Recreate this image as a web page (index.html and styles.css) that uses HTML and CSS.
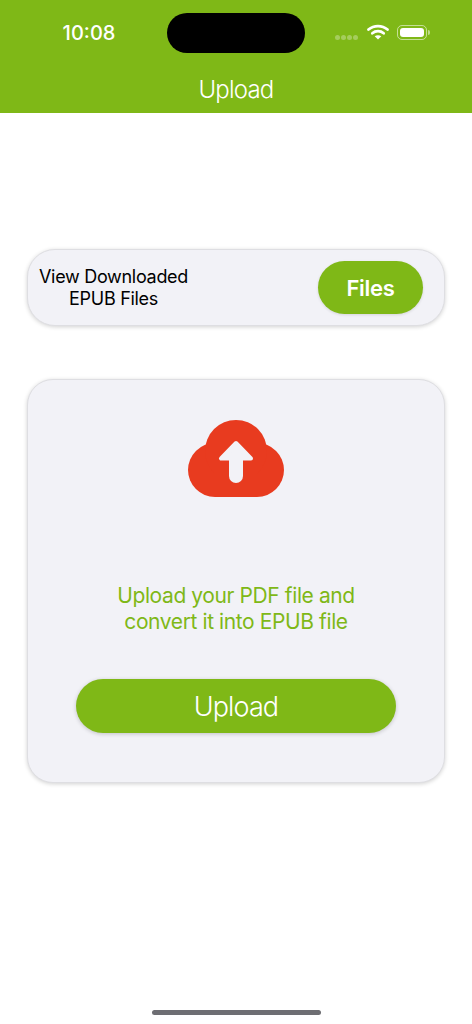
FILE: index.html
```html
<!DOCTYPE html>
<html lang="en">
<head>
  <meta charset="UTF-8" />
  <meta name="viewport" content="width=device-width, initial-scale=1.0" />
  <title>Upload</title>
  <link rel="stylesheet" href="styles.css">
</head>
<body>
  <header class="header">
    <div class="status-bar">
      <span class="time">10:08</span>
      <div class="island"></div>
      <div class="status-icons">
        <div class="signal"><i></i><i></i><i></i><i></i></div>
        <svg class="wifi" width="22" height="16" viewBox="0 0 22 16">
          <path d="M1.500 5.600C6.800.9 15.200.9 20.500 5.600" fill="none" stroke="#fff" stroke-width="2.700" stroke-linecap="round"/>
          <path d="M5.300 9.300C8.600 6.500 13.400 6.500 16.700 9.300" fill="none" stroke="#fff" stroke-width="2.700" stroke-linecap="round"/>
          <path d="M11 15.600 7.700 12.300C9.600 10.900 12.400 10.900 14.300 12.300Z" fill="#fff"/>
        </svg>
        <div class="battery"><div class="battery-level"></div></div>
        <div class="battery-tip"></div>
      </div>
    </div>
    <h1 class="title">Upload</h1>
  </header>

  <main class="content">
    <section class="files-card">
      <p class="files-label">View Downloaded<br>EPUB Files</p>
      <button class="files-btn">Files</button>
    </section>

    <section class="upload-card">
      <svg class="cloud" width="96" height="77" viewBox="0 0 96 77">
        <g fill="#e83b1f">
          <circle cx="27" cy="50" r="27"/>
          <circle cx="69" cy="50" r="27"/>
          <circle cx="48" cy="31" r="31"/>
          <rect x="27" y="40" width="42" height="37"/>
        </g>
        <path d="M48 23 33 38.500H63Z" fill="#f2f2f7" stroke="#f2f2f7" stroke-width="4" stroke-linejoin="round"/>
        <path d="M48 38V56" fill="none" stroke="#f2f2f7" stroke-width="14" stroke-linecap="round"/>
      </svg>
      <p class="upload-text">Upload your PDF file and<br>convert it into EPUB file</p>
      <button class="upload-btn">Upload</button>
    </section>
  </main>

  <div class="home-bar"></div>
</body>
</html>
```

FILE: styles.css
```css
* { box-sizing: border-box; }
html, body { height: 100%; }
body { margin: 0; height: 1024px; display: flex; flex-direction: column; background-color: #fff; font-family: Inter, "Liberation Sans", sans-serif; overflow: hidden; }
button { border: none; font-family: inherit; color: #fff; background-color: #7fb817; cursor: pointer; }

.header { height: 113px; flex-shrink: 0; background-color: #7fb817; color: #fff; padding-top: 13px; }
.status-bar { height: 40px; display: grid; grid-template-columns: 167px 138px 167px; align-items: center; }
.time { font-size: 20px; font-weight: 500; text-align: center; padding-left: 11px; padding-bottom: 1px; }
.island { height: 40px; background-color: #000; border-radius: 20px; }
.status-icons { display: flex; align-items: center; padding-left: 30px; padding-bottom: 2px; }
.signal { display: flex; gap: 1px; margin-top: 10px; margin-right: 9px; }
.signal i { width: 5px; height: 5px; border-radius: 50%; background-color: rgba(255, 255, 255, 0.3); }
.wifi { margin-right: 8px; }
.battery { width: 30px; height: 15px; padding: 2px; border: 1px solid rgba(255, 255, 255, 0.55); border-radius: 5px; }
.battery-level { height: 100%; background-color: #fff; border-radius: 3px; }
.battery-tip { width: 2px; height: 5px; margin-left: 1px; background-color: rgba(255, 255, 255, 0.5); border-radius: 0 2px 2px 0; }
.title { margin: 22px 0 0; font-size: 24px; line-height: 30px; font-weight: 300; letter-spacing: -0.8px; text-align: center; }

.content { flex: 1; display: flex; flex-direction: column; gap: 53px; padding: 136px 27px 0; }
.files-card { height: 77px; display: flex; align-items: center; justify-content: space-between; padding: 0 21px 0 11px; background-color: #f2f2f7; border: 1px solid #dedee2; border-radius: 28px; box-shadow: 0 1px 4px rgba(0, 0, 0, 0.18); }
.files-label { margin: 0; font-size: 18px; line-height: 22px; letter-spacing: -0.3px; text-align: center; color: #000; }
.files-btn { width: 105px; height: 53px; border-radius: 27px; font-size: 22px; font-weight: 600; letter-spacing: -0.3px; box-shadow: 0 1px 3px rgba(0, 0, 0, 0.12); }

.upload-card { height: 404px; display: flex; flex-direction: column; align-items: center; padding-top: 40px; background-color: #f2f2f7; border: 1px solid #dedee2; border-radius: 26px; box-shadow: 0 1px 4px rgba(0, 0, 0, 0.18); }
.upload-text { margin: 86px 0 0; font-size: 21px; line-height: 26px; font-weight: 400; letter-spacing: -0.4px; text-align: center; color: #7fb817; }
.upload-btn { width: 320px; height: 54px; margin-top: 44px; border-radius: 27px; font-size: 27px; font-weight: 300; letter-spacing: -0.9px; box-shadow: 0 1px 4px rgba(0, 0, 0, 0.2); }

.home-bar { width: 169px; height: 5px; flex-shrink: 0; margin: 0 0 9px 152px; background-color: #6e6e73; border-radius: 3px; }
```
